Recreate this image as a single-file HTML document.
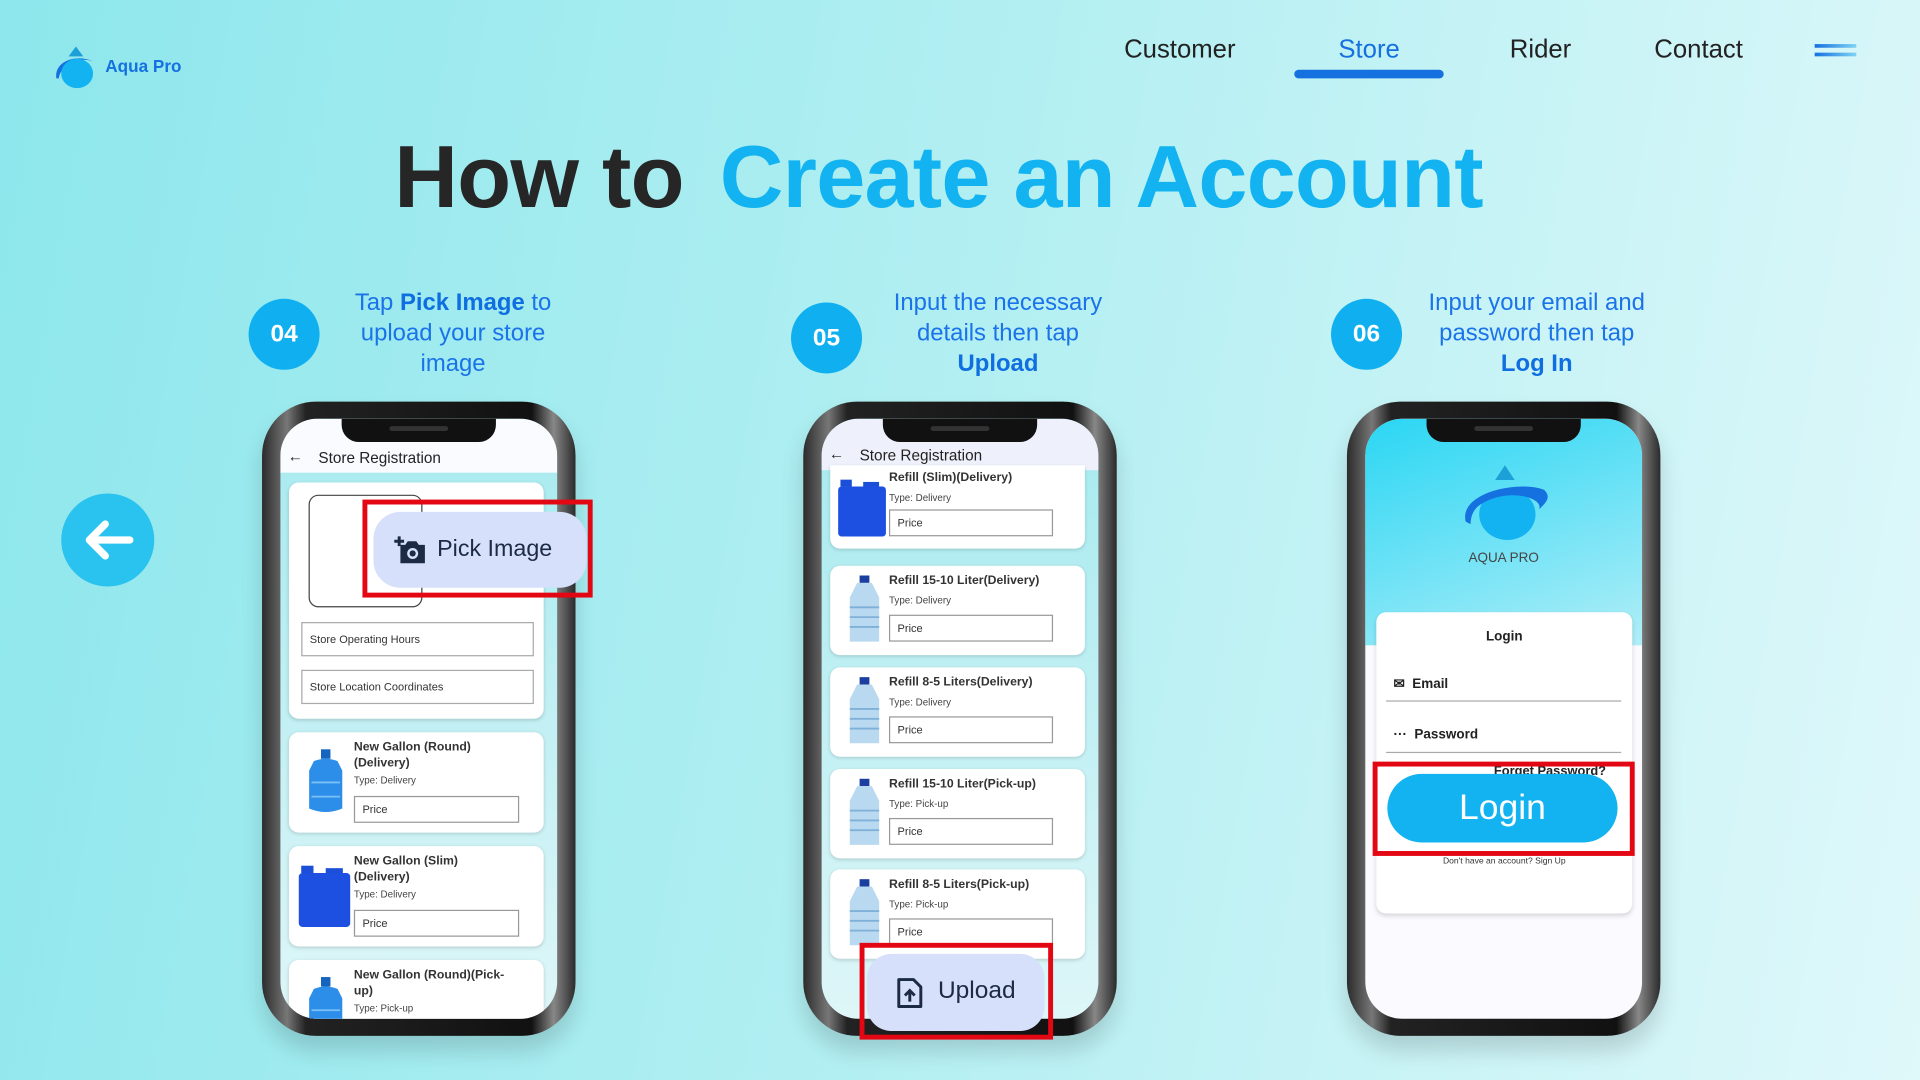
<!DOCTYPE html>
<html><head><meta charset="utf-8"><style>
*{margin:0;padding:0;box-sizing:border-box}
html,body{width:1920px;height:1080px;overflow:hidden}
body{background:linear-gradient(100deg,#8de7ec 0%,#b3eff2 50%,#dff8fa 100%);font-family:"Liberation Sans",sans-serif}
#w{position:absolute;left:0;top:0;width:1568px;height:882px;transform:scale(1.22449);transform-origin:0 0}
.a{position:absolute}
.nav{position:absolute;top:29px;font-size:21px;color:#222}
.circ{position:absolute;width:58px;height:58px;border-radius:50%;background:#10b0f0;color:#fff;font-weight:bold;font-size:20px;text-align:center;line-height:58px}
.step{position:absolute;width:240px;text-align:center;color:#1a73e8;font-size:19.5px;line-height:25px}
.step b{color:#0f6fe0}
.phone{position:absolute;width:256px;height:518px;border-radius:44px;background:linear-gradient(90deg,#2b2b2b,#777 8%,#222 14%,#111 86%,#888 93%,#2b2b2b);box-shadow:0 12px 18px rgba(0,0,0,.15)}
.scr{position:absolute;left:15px;top:14px;width:226px;height:490px;border-radius:30px;overflow:hidden;background:#e9f4f8}
.notch{position:absolute;left:50%;top:0;width:126px;height:19px;margin-left:-63px;background:#111;border-radius:0 0 14px 14px;z-index:5}
.notch:before{content:"";position:absolute;left:39px;top:6px;width:48px;height:4px;border-radius:2px;background:#333}
.hdr{position:absolute;left:0;top:0;width:100%;height:44px;background:#fafbff;font-size:12.5px;color:#222}
.card{position:absolute;left:7px;width:208px;background:#fff;border-radius:8px;box-shadow:0 1px 3px rgba(0,0,0,.15)}
.it{font-size:10px;font-weight:bold;color:#333;position:absolute;line-height:13px}
.ty{font-size:8px;color:#444;position:absolute}
.pr{position:absolute;height:22px;border:1px solid #999;font-size:9px;color:#333;padding:5px 6px;background:#fff}
.fld{position:absolute;left:10px;width:190px;height:28px;border:1px solid #aaa;font-size:9px;color:#333;padding:8px 6px}
.red{position:absolute;border:4px solid #e30613}
</style></head><body><div id="w">
<svg class="a" style="left:42px;top:36px" width="40" height="38" viewBox="0 0 40 38"><path d="M20 2 L14 10 H26Z" fill="#1d9fd8"/><path d="M4 28 C2 14 20 8 34 14 C22 10 8 16 6 28Z" fill="#1570e0"/><ellipse cx="21" cy="24" rx="13" ry="12" fill="#12b3f0"/></svg>
<div class="a" style="left:86px;top:46px;font-size:14px;font-weight:bold;color:#1570e0">Aqua Pro</div>
<div class="nav" style="left:918px">Customer</div>
<div class="nav" style="left:1093px;color:#1570e0">Store</div>
<div class="nav" style="left:1233px">Rider</div>
<div class="nav" style="left:1351px">Contact</div>
<div class="a" style="left:1057px;top:57px;width:122px;height:7px;border-radius:4px;background:#1570e0"></div>
<div class="a" style="left:1482px;top:36px;width:34px;height:3px;background:linear-gradient(90deg,#1570e0,#7fd3f3)"></div>
<div class="a" style="left:1482px;top:43px;width:34px;height:3px;background:linear-gradient(90deg,#1570e0,#7fd3f3)"></div>
<div class="a" style="left:322px;top:104px;font-size:72px;font-weight:bold;letter-spacing:-0.6px;white-space:nowrap;color:#262626">How to <span style="color:#12b3f0;margin-left:10px">Create an Account</span></div>

<div class="circ" style="left:203px;top:244px">04</div>
<div class="step" style="left:250px;top:235px">Tap <b>Pick Image</b> to<br>upload your store<br>image</div>
<div class="circ" style="left:646px;top:247px">05</div>
<div class="step" style="left:695px;top:235px">Input the necessary<br>details then tap<br><b>Upload</b></div>
<div class="circ" style="left:1087px;top:244px">06</div>
<div class="step" style="left:1135px;top:235px">Input your email and<br>password then tap<br><b>Log In</b></div>

<div class="a" style="left:50px;top:403px;width:76px;height:76px;border-radius:50%;background:#2ac3ef"></div>
<svg class="a" style="left:66px;top:420px" width="44" height="42" viewBox="0 0 44 42"><path d="M40 21 H8 M20 8 L7 21 L20 34" stroke="#fff" stroke-width="6" fill="none" stroke-linecap="round" stroke-linejoin="round"/></svg>

<svg width="0" height="0" style="position:absolute"><defs>
<symbol id="rb" viewBox="0 0 40 60"><rect x="16" y="2" width="8" height="8" fill="#1565c0"/><path d="M10 12 Q20 8 30 12 L34 20 V52 Q20 58 6 52 V20Z" fill="#2c8ee8"/><path d="M8 30 H32 M8 42 H32" stroke="#7cc1f5" stroke-width="1.5"/></symbol>
<symbol id="sb" viewBox="0 0 46 56"><rect x="4" y="4" width="10" height="6" fill="#1c4fd8"/><rect x="24" y="6" width="14" height="6" fill="#1c4fd8"/><rect x="2" y="10" width="42" height="44" rx="3" fill="#1d4fe0"/></symbol>
<symbol id="cb" viewBox="0 0 40 60"><rect x="16" y="2" width="8" height="6" fill="#1b3fa0"/><path d="M14 8 H26 L32 20 V56 H8 V20Z" fill="#b9d9f0"/><path d="M8 28 H32 M8 36 H32 M8 44 H32" stroke="#7fb0d8" stroke-width="1.5"/></symbol>
</defs></svg>

<!-- phone 1 -->
<div class="phone" style="left:214px;top:328px"><div class="scr" style="background:linear-gradient(#a6eaef,#def6f8)">
<div class="notch"></div>
<div class="hdr"><span class="a" style="left:6px;top:24px">←</span><span class="a" style="left:31px;top:25px">Store Registration</span></div>
<div class="card" style="top:52px;height:193px"><div class="a" style="left:16px;top:10px;width:93px;height:92px;border:1px solid #444;border-radius:8px"></div>
<div class="fld" style="top:114px">Store Operating Hours</div><div class="fld" style="top:153px">Store Location Coordinates</div></div>
<div class="card" style="top:256px;height:82px"><svg class="a" style="left:10px;top:12px" width="40" height="58"><use href="#rb"/></svg><div class="it" style="left:53px;top:6px">New Gallon (Round)<br>(Delivery)</div><div class="ty" style="left:53px;top:35px">Type: Delivery</div><div class="pr" style="left:53px;top:52px;width:135px">Price</div></div>
<div class="card" style="top:349px;height:82px"><svg class="a" style="left:6px;top:12px" width="46" height="56"><use href="#sb"/></svg><div class="it" style="left:53px;top:6px">New Gallon (Slim)<br>(Delivery)</div><div class="ty" style="left:53px;top:35px">Type: Delivery</div><div class="pr" style="left:53px;top:52px;width:135px">Price</div></div>
<div class="card" style="top:442px;height:60px"><svg class="a" style="left:10px;top:12px" width="40" height="58"><use href="#rb"/></svg><div class="it" style="left:53px;top:6px">New Gallon (Round)(Pick-<br>up)</div><div class="ty" style="left:53px;top:35px">Type: Pick-up</div></div>
</div></div>
<div class="a" style="left:305px;top:418px;width:174px;height:62px;border-radius:22px;background:#d6e0fb;font-size:19px;color:#1c2a44;font-weight:bold"><svg class="a" style="left:16px;top:18px" width="28" height="26" viewBox="0 0 28 26"><path d="M5 2V10M1 6H9" stroke="#1c2a44" stroke-width="2.4"/><path d="M6 9H10L12 6H19L21 9H26V24H6Z" fill="#1c2a44"/><circle cx="16" cy="16" r="4.5" fill="#d6e0fb"/><circle cx="16" cy="16" r="2.5" fill="#1c2a44"/></svg><span class="a" style="left:52px;top:20px;font-weight:normal">Pick Image</span></div>
<div class="red" style="left:296px;top:408px;width:188px;height:80px"></div>

<!-- phone 2 -->
<div class="phone" style="left:656px;top:328px"><div class="scr" style="background:linear-gradient(#a6eaef,#def6f8)">
<div class="notch"></div>
<div class="hdr" style="height:42px;background:#eef1fb"><span class="a" style="left:6px;top:22px">←</span><span class="a" style="left:31px;top:23px">Store Registration</span></div>
<div class="card" style="top:38px;height:68px;border-radius:0 0 8px 8px"><svg class="a" style="left:4px;top:8px" width="44" height="52"><use href="#sb"/></svg><div class="it" style="left:48px;top:4px">Refill (Slim)(Delivery)</div><div class="ty" style="left:48px;top:22px">Type: Delivery</div><div class="pr" style="left:48px;top:36px;width:134px">Price</div></div>
<div class="card" style="top:120px;height:73px"><svg class="a" style="left:8px;top:6px" width="40" height="60"><use href="#cb"/></svg><div class="it" style="left:48px;top:6px">Refill 15-10 Liter(Delivery)</div><div class="ty" style="left:48px;top:24px">Type: Delivery</div><div class="pr" style="left:48px;top:40px;width:134px">Price</div></div>
<div class="card" style="top:203px;height:73px"><svg class="a" style="left:8px;top:6px" width="40" height="60"><use href="#cb"/></svg><div class="it" style="left:48px;top:6px">Refill 8-5 Liters(Delivery)</div><div class="ty" style="left:48px;top:24px">Type: Delivery</div><div class="pr" style="left:48px;top:40px;width:134px">Price</div></div>
<div class="card" style="top:286px;height:73px"><svg class="a" style="left:8px;top:6px" width="40" height="60"><use href="#cb"/></svg><div class="it" style="left:48px;top:6px">Refill 15-10 Liter(Pick-up)</div><div class="ty" style="left:48px;top:24px">Type: Pick-up</div><div class="pr" style="left:48px;top:40px;width:134px">Price</div></div>
<div class="card" style="top:368px;height:73px"><svg class="a" style="left:8px;top:6px" width="40" height="60"><use href="#cb"/></svg><div class="it" style="left:48px;top:6px">Refill 8-5 Liters(Pick-up)</div><div class="ty" style="left:48px;top:24px">Type: Pick-up</div><div class="pr" style="left:48px;top:40px;width:134px">Price</div></div>
</div></div>
<div class="a" style="left:708px;top:779px;width:145px;height:63px;border-radius:20px;background:#d6e0fb;font-size:20px;color:#1c2a44"><svg class="a" style="left:24px;top:19px" width="22" height="26" viewBox="0 0 22 26"><path d="M2 2H14L20 8V24H2Z" fill="none" stroke="#1c2a44" stroke-width="2.4" stroke-linejoin="round"/><path d="M11 20V11M7 15L11 11L15 15" stroke="#1c2a44" stroke-width="2.4" fill="none"/></svg><span class="a" style="left:58px;top:19px">Upload</span></div>
<div class="red" style="left:702px;top:770px;width:158px;height:79px"></div>

<!-- phone 3 -->
<div class="phone" style="left:1100px;top:328px"><div class="scr" style="background:#fbfbff">
<div class="a" style="left:0;top:0;width:100%;height:185px;background:linear-gradient(160deg,#2ad6f4,#b0eef7)"></div>
<div class="notch"></div>
<svg class="a" style="left:76px;top:36px" width="76" height="72" viewBox="0 0 76 72"><path d="M38 2 L30 14 H46Z" fill="#1d9fd8"/><ellipse cx="40" cy="42" rx="23" ry="21" fill="#12b3f0"/><path d="M6 48 C0 24 50 14 70 22 C76 28 72 32 66 38 C70 28 40 20 18 34 C12 38 10 44 10 50Z" fill="#1570e0"/></svg>
<div class="a" style="left:0;width:100%;top:108px;text-align:center;font-size:11px;color:#444">AQUA PRO</div>
<div class="a" style="left:9px;top:158px;width:209px;height:246px;background:#fff;border-radius:8px;box-shadow:0 2px 4px rgba(0,0,0,.15)">
<div class="a" style="left:0;width:100%;top:14px;text-align:center;font-size:11px;font-weight:bold;color:#222">Login</div>
<div class="a" style="left:14px;top:52px;font-size:11px;font-weight:bold;color:#222">✉&nbsp; Email</div>
<div class="a" style="left:8px;top:72px;width:192px;height:1px;background:#aaa"></div>
<div class="a" style="left:14px;top:94px;font-size:11px;font-weight:bold;color:#222">···&nbsp; Password</div>
<div class="a" style="left:8px;top:114px;width:192px;height:1px;background:#aaa"></div>
<div class="a" style="left:96px;top:124px;font-size:10.5px;font-weight:bold;color:#222">Forget Password?</div>
<div class="a" style="left:0;width:100%;top:200px;text-align:center;font-size:7px;color:#333">Don't have an account? Sign Up</div>
</div>
</div></div>
<div class="a" style="left:1133px;top:632px;width:188px;height:56px;border-radius:28px;background:#12b3f0;color:#fff;font-size:29px;text-align:center;line-height:56px">Login</div>
<div class="red" style="left:1121px;top:622px;width:214px;height:77px"></div>
</div></body></html>
